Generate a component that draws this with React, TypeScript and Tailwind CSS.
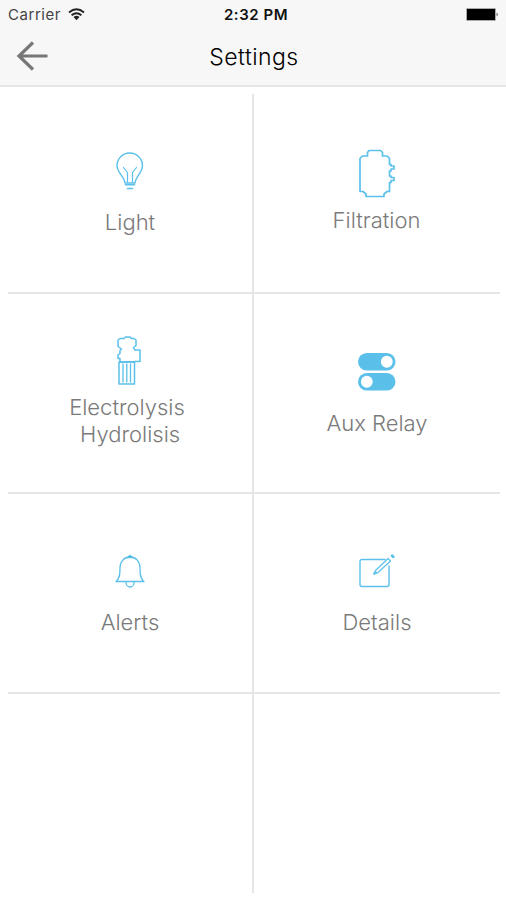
import type { ReactNode } from "react";

const stroke = { fill: "none", stroke: "#5bc0ea", strokeWidth: 1.5, strokeLinejoin: "round", strokeLinecap: "round" } as const;

function Bulb() {
  return (
    <svg width="28" height="39" viewBox="0 0 28 39" {...stroke} strokeWidth={1.4}>
      <path d="M9 31C8.500 25 1 20.500 1 13.500A12.700 12.500 0 0 1 26.500 13.500C26.500 20.500 19.500 25 19 31Z" />
      <path d="M7.500 15.500L11.500 20.500V30M20.500 15.500L16.500 20.500V30" strokeWidth="1.200" />
      <path d="M9.500 32.700h9M11.500 36.500h5" strokeWidth="1.600" />
    </svg>
  );
}

function Filter() {
  return (
    <svg width="38" height="49" viewBox="0 0 38 49" {...stroke} strokeWidth={1.7}>
      <path d="M9.500 3.500L11 1.500H22.500L24.500 3.500V7H29L31.500 9.500V15.500H33V17H36V20H33V22H31.500V27H33V28.500H36V31.500H33V33.500H31.500V42.500H29L26 45V47.500H8V45L5 42.500H2V9.500L4.500 7H9.500Z" />
    </svg>
  );
}

function Electrolysis() {
  return (
    <svg className="translate-x-[2px]" width="26" height="49" viewBox="0 0 26 49" {...stroke} strokeWidth={1.5}>
      <path d="M4 26V22.500H2V19L4 17.500V14.500L5.500 13L2 10.500V4L4 2.500H8L9.500 1H14L15.500 2.500H18L20 4V9.500L17.500 11.500L19 14H24V25.500H18.500V26Z" />
      <path d="M3 26H18.500V48H3Z" />
      <path d="M7 28V46M10.800 28V46M14.500 28V46" strokeWidth="1.300" />
    </svg>
  );
}

function Relay() {
  return (
    <svg width="38" height="38" viewBox="0 0 38 38" fill="none">
      <rect width="37.500" height="17.500" rx="8.750" fill="#5bc0e9" />
      <rect y="20" width="37.500" height="17.500" rx="8.750" fill="#5bc0e9" />
      <circle cx="28.800" cy="8.750" r="5.900" fill="white" />
      <circle cx="8.800" cy="28.750" r="5.900" fill="white" />
    </svg>
  );
}

function Bell() {
  return (
    <svg width="30" height="36" viewBox="0 0 30 36" {...stroke} strokeWidth={1.3}>
      <path d="M1 27.500C4.500 25 5 21 5 14C5 7.500 9 3 15 3S25 7.500 25 14C25 21 25.500 25 29 27.500Z" />
      <path d="M11 28.500A4 4.500 0 0 0 19 28.500" />
      <path d="M12 3.500L15 1L18 3.500Z" fill="#3fb2e5" strokeWidth=".8" />
    </svg>
  );
}

function Edit() {
  return (
    <svg width="36" height="34" viewBox="0 0 36 34" {...stroke} strokeWidth={1.4}>
      <path d="M26 5.500H3Q1 5.500 1 7.500V30.500Q1 32.500 3 32.500H28Q30 32.500 30 30.500V12" />
      <path d="M15 20L16.500 16.500L29 4.500L31.500 7L18.500 19Z" strokeWidth="1.200" />
      <path d="M15.300 19.700L16.800 18.200" strokeWidth="2.200" />
      <path d="M33.200 1.700L34.200 2.700" strokeWidth="2.800" />
    </svg>
  );
}

function Tile({ icon, label, className }: { icon: ReactNode; label: ReactNode; className: string }) {
  return (
    <button className={`flex flex-col items-center border-[#e6e6e6] ${className}`}>
      {icon}
      <span className="text-[22px] leading-[27px] font-light text-[#7a7a7a]">{label}</span>
    </button>
  );
}

export default function App() {
  return (
    <div className="flex h-[900px] w-[506px] flex-col overflow-hidden bg-white font-['Inter','Liberation_Sans',sans-serif]">
      <header className="h-[87px] border-b-2 border-[#e6e6e6] bg-[#f7f7f7]">
        <div className="grid h-[29px] grid-cols-3 items-center pr-[7px] pl-2 text-[15px] text-[#444]">
          <div className="flex items-center gap-[7px] pt-px">
            <span className="tracking-[0.550px]">Carrier</span>
            <svg className="-translate-y-px" width="17" height="13" viewBox="0 0 17 13" fill="none" stroke="#222" strokeWidth="1.900">
              <path d="M1 4.500Q8.500-1.800 16 4.500M3.600 7.300Q8.500 3.200 13.400 7.300" />
              <path d="M5.500 9Q8.500 6.600 11.500 9L8.500 12.300Z" fill="#222" stroke="none" />
            </svg>
          </div>
          <span className="pt-px pl-[5px] text-center font-semibold tracking-[0.550px] text-[#111]">2:32 PM</span>
          <svg className="justify-self-end" width="33" height="13" viewBox="0 0 33 13">
            <rect x=".5" y=".5" width="29" height="12" rx="1" fill="#000" stroke="#aaa" />
            <path d="M30.500 4.500Q33.500 6.500 30.500 8.500Z" fill="#777" />
          </svg>
        </div>
        <div className="grid h-[56px] grid-cols-3 items-center px-4">
          <svg className="-translate-y-px" width="32" height="30" viewBox="0 0 32 30" fill="none" stroke="#777" strokeWidth="3.200">
            <path d="M17 1.500L3 15L17 28.500M3 15H31.500" />
          </svg>
          <h1 className="pt-px pl-[2px] text-center text-[23px] font-light tracking-[0.450px] text-black">Settings</h1>
        </div>
      </header>
      <main className="grid grid-cols-[246px_246px] grid-rows-[200px_200px_200px_199px] pt-[7px] pl-2">
        <Tile className="gap-[18px] border-r-2 border-b-2 pt-[58px]" icon={<Bulb />} label="Light" />
        <Tile className="gap-[9px] border-b-2 pr-px pt-[55px]" icon={<Filter />} label="Filtration" />
        <Tile className="gap-[9px] border-r-2 border-b-2 pr-[6px] pt-[42px]" icon={<Electrolysis />} label={<>Electrolysis<br />&nbsp;Hydrolisis</>} />
        <Tile className="gap-[19px] border-b-2 pt-[59px]" icon={<Relay />} label="Aux Relay" />
        <Tile className="gap-[19px] border-r-2 border-b-2 pt-[60px]" icon={<Bell />} label="Alerts" />
        <Tile className="gap-[21px] border-b-2 pt-[60px]" icon={<Edit />} label="Details" />
        <div className="border-r-2 border-[#e6e6e6]" />
        <div />
      </main>
    </div>
  );
}
